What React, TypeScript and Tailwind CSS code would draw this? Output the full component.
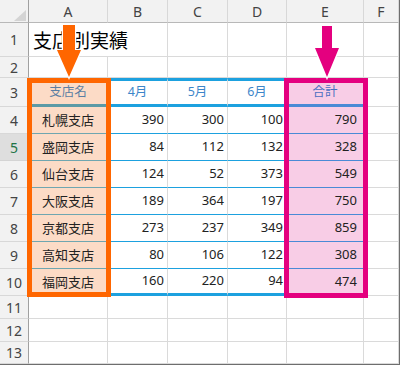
import React from 'react';

const rows: [string, number, number, number, number][] = [
  ['札幌支店', 390, 300, 100, 790],
  ['盛岡支店', 84, 112, 132, 328],
  ['仙台支店', 124, 52, 373, 549],
  ['大阪支店', 189, 364, 197, 750],
  ['京都支店', 273, 237, 349, 859],
  ['高知支店', 80, 106, 122, 308],
  ['福岡支店', 160, 220, 94, 474],
];

const letters = ['A', 'B', 'C', 'D', 'E', 'F'];

function RowHead({ n, active = false }: { n: number; active?: boolean }) {
  return (
    <div
      className={
        active
          ? 'flex items-center justify-center border-r border-b border-r-[#a0a0a0] border-b-[#d4d4d4] bg-[#dedede] text-[14px] text-[#217346]'
          : 'flex items-center justify-center border-r border-b border-r-[#a0a0a0] border-b-[#d8d8d8] bg-[#f2f2f2] text-[14px] text-[#444]'
      }
    >
      {n}
    </div>
  );
}

function Plain() {
  return <div className="border-r border-b border-[#dadada]" />;
}

export default function App() {
  return (
    <div className="relative w-[400px] h-[365px] overflow-hidden bg-white border-r border-b border-[#6e6e6e] font-['Noto_Sans','Noto_Sans_CJK_JP',sans-serif]">
      <div className="grid h-full grid-cols-[29px_79px_60px_60px_59px_77px_1fr] grid-rows-[23px_34px_21px_29px_repeat(7,27px)_23px_23px_1fr]">
        {/* column headers */}
        <div className="relative border-r border-b border-r-[#a0a0a0] border-b-[#b8b8b8] bg-[#f2f2f2]">
          <svg className="absolute left-[14px] top-[10px]" width="12" height="11" viewBox="0 0 12 11">
            <polygon points="12,0 12,11 0,11" fill="#d4d4d4" />
          </svg>
        </div>
        {letters.map((l) => (
          <div
            key={l}
            className="flex items-center justify-center border-r border-b border-r-[#d8d8d8] border-b-[#b8b8b8] bg-[#f2f2f2] text-[14px] text-[#444]"
          >
            {l}
          </div>
        ))}

        {/* row 1 */}
        <RowHead n={1} />
        <div className="col-span-2 flex items-center pl-[4px] pt-[1px] border-r border-b border-[#dadada] text-[19px] text-black whitespace-nowrap font-['Noto_Sans_CJK_JP',sans-serif]">
          支店別実績
        </div>
        <Plain />
        <Plain />
        <Plain />
        <Plain />

        {/* row 2 */}
        <RowHead n={2} />
        <Plain />
        <Plain />
        <Plain />
        <Plain />
        <Plain />
        <Plain />

        {/* row 3: header */}
        <RowHead n={3} />
        <div className="flex items-center justify-center border-r border-r-[#dadada] border-b-[3px] border-b-[#5b9aa6] bg-[#fcdbc6] text-[12.5px] text-[#5a7ea3] font-['Noto_Sans_CJK_JP',sans-serif]">
          支店名
        </div>
        {['4月', '5月', '6月'].map((m) => (
          <div
            key={m}
            className="flex items-center justify-center border-r border-r-[#dadada] border-t-[3px] border-t-[#1da1df] border-b-[3px] border-b-[#1da1df] text-[12.5px] text-[#3c86c9]"
          >
            {m}
          </div>
        ))}
        <div className="flex items-center justify-center border-r border-r-[#dadada] border-b-[3px] border-b-[#4a8ad6] bg-[#f8cde6] text-[12.5px] text-[#4a6fc1] font-['Noto_Sans_CJK_JP',sans-serif]">
          合計
        </div>
        <Plain />

        {/* data rows */}
        {rows.map((r, i) => {
          const last = i === rows.length - 1;
          return (
            <React.Fragment key={r[0]}>
              <RowHead n={i + 4} active={i === 1} />
              <div className="flex items-center justify-center border-r border-r-[#dadada] border-b border-b-[#6fa6b0] bg-[#fcdbc6] text-[13px] text-[#222] font-['Noto_Sans_CJK_JP',sans-serif]">
                {r[0]}
              </div>
              {[r[1], r[2], r[3]].map((v, j) => (
                <div
                  key={j}
                  className={
                    last
                      ? 'flex items-center justify-end pr-[3px] border-r border-r-[#dadada] border-b-[3px] border-b-[#1da1df] text-[13px] text-[#222]'
                      : 'flex items-center justify-end pr-[3px] border-r border-r-[#dadada] border-b border-b-[#1da1df] text-[13px] text-[#222]'
                  }
                >
                  {v}
                </div>
              ))}
              <div className="flex items-center justify-end pr-[6px] border-r border-r-[#dadada] border-b border-b-[#4a8ad6] bg-[#f8cde6] text-[13px] text-[#222]">
                {r[4]}
              </div>
              <Plain />
            </React.Fragment>
          );
        })}

        {/* rows 11-13 */}
        {[11, 12, 13].map((n) => (
          <React.Fragment key={n}>
            <RowHead n={n} />
            <Plain />
            <Plain />
            <Plain />
            <Plain />
            <Plain />
            <Plain />
          </React.Fragment>
        ))}
      </div>

      {/* highlight frames */}
      <div className="absolute left-[27px] top-[78px] w-[84px] h-[219px] border-[5px] border-[#ff6600]" />
      <div className="absolute left-[284px] top-[78px] w-[84px] h-[220px] border-[5px] border-[#e4007f]" />

      {/* arrows */}
      <svg className="absolute left-[50px] top-[20px]" width="38" height="62" viewBox="0 0 38 62">
        <polygon
          points="13,5 25,5 25,30 31,30 19,57 7,30 13,30"
          fill="#ff6600"
          stroke="#fff"
          strokeWidth="2.5"
          strokeLinejoin="miter"
          paintOrder="stroke"
        />
      </svg>
      <svg className="absolute left-[308px] top-[20px]" width="38" height="62" viewBox="0 0 38 62">
        <polygon
          points="14,6 24,6 24,28 31,28 19,57 7,28 14,28"
          fill="#e4007f"
          stroke="#fff"
          strokeWidth="2.5"
          strokeLinejoin="miter"
          paintOrder="stroke"
        />
      </svg>
    </div>
  );
}
